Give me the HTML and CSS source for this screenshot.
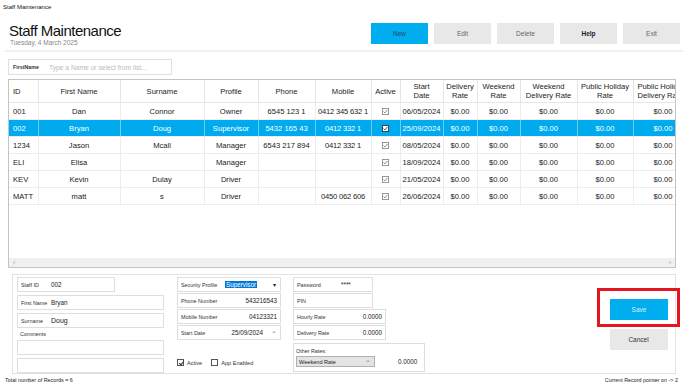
FILE: index.html
```html
<!DOCTYPE html>
<html lang="en">
<head>
  <meta charset="UTF-8">
  <title>Staff Maintenance</title>
  <link rel="stylesheet" href="styles.css">
</head>
<body>

  <div class="titlebar">Staff Maintenance</div>

  <!-- Header: title + toolbar -->
  <div class="header">
    <div class="title-block">
      <h1>Staff Maintenance</h1>
      <div class="date">Tuesday, 4 March 2025</div>
    </div>
    <div class="toolbar">
      <button class="btn btn-blue">New</button>
      <button class="btn">Edit</button>
      <button class="btn">Delete</button>
      <button class="btn btn-bold">Help</button>
      <button class="btn">Exit</button>
    </div>
  </div>
  <div class="divider"></div>

  <div class="search">
    <span class="search-label">FirstName</span>
    <span class="search-placeholder">Type a Name or select from list...</span>
  </div>

  <!-- Staff grid -->
  <div class="grid">
    <div class="grid-body">
      <table class="staff-table">
        <colgroup>
          <col style="width:29px"><col style="width:82px"><col style="width:84px"><col style="width:54px">
          <col style="width:57px"><col style="width:56px"><col style="width:29px"><col style="width:43px">
          <col style="width:34px"><col style="width:43px"><col style="width:57px"><col style="width:56px">
          <col style="width:60px">
        </colgroup>
        <thead>
          <tr>
            <th class="left">ID</th>
            <th>First Name</th>
            <th>Surname</th>
            <th>Profile</th>
            <th>Phone</th>
            <th>Mobile</th>
            <th>Active</th>
            <th>Start<br>Date</th>
            <th>Delivery<br>Rate</th>
            <th>Weekend<br>Rate</th>
            <th>Weekend<br>Delivery Rate</th>
            <th>Public Holiday<br>Rate</th>
            <th class="clip">Public Holiday<br>Delivery Rate</th>
          </tr>
        </thead>
        <tbody id="staffRows"></tbody>
      </table>
    </div>
    <div class="hscroll"><span>&lsaquo;</span><span>&rsaquo;</span></div>
  </div>

  <!-- Detail panel -->
  <div class="panel">
    <div class="col col-1">
      <div class="field short"><span class="lbl">Staff ID</span><span class="val">002</span></div>
      <div class="field"><span class="lbl">First Name</span><span class="val">Bryan</span></div>
      <div class="field"><span class="lbl">Surname</span><span class="val big">Doug</span></div>
      <div class="comments-label">Comments</div>
      <div class="field"></div>
      <div class="field"></div>
    </div>

    <div class="col col-2">
      <div class="field"><span class="lbl wide">Security Profile</span><span class="val"><span class="selected-text">Supervisor</span></span><span class="caret">&#9662;</span></div>
      <div class="field"><span class="lbl wide">Phone Number</span><span class="val right">543216543</span></div>
      <div class="field"><span class="lbl wide">Mobile Number</span><span class="val right">04123321</span></div>
      <div class="field"><span class="lbl wide">Start Date</span><span class="val right">25/09/2024</span><span class="chev">&#8964;</span></div>
      <div class="checks">
        <label class="check"><span class="box checked"></span>Active</label>
        <label class="check"><span class="box"></span>App Enabled</label>
      </div>
    </div>

    <div class="col col-3">
      <div class="field pw"><span class="lbl wide">Password</span><span class="val">****</span></div>
      <div class="field pw"><span class="lbl wide">PIN</span></div>
      <div class="field rate"><span class="lbl wide">Hourly Rate</span><span class="val right">0.0000</span></div>
      <div class="field rate"><span class="lbl wide">Delivery Rate</span><span class="val right">0.0000</span></div>
      <div class="other-rates">
        <div class="other-label">Other Rates:</div>
        <div class="other-row">
          <div class="select">Weekend Rate<span class="chev">&#8964;</span></div>
          <span class="other-val">0.0000</span>
        </div>
      </div>
    </div>

    <div class="actions">
      <div class="highlight">
        <button class="btn btn-blue btn-save">Save</button>
      </div>
      <button class="btn btn-cancel">Cancel</button>
    </div>
  </div>

  <div class="footer">
    <span>Total number of Records = 6</span>
    <span>Current Record pointer on -&gt; 2</span>
  </div>

  <script>
    const staff = [
      ["001", "Dan", "Connor", "Owner", "6545 123 1", "0412 345 632 1", "06/05/2024"],
      ["002", "Bryan", "Doug", "Supervisor", "5432 165 43", "0412 332 1", "25/09/2024"],
      ["1234", "Jason", "Mcall", "Manager", "6543 217 894", "0412 332 1", "08/05/2024"],
      ["ELI", "Elisa", "", "Manager", "", "", "18/09/2024"],
      ["KEV", "Kevin", "Dulay", "Driver", "", "", "21/05/2024"],
      ["MATT", "matt", "s", "Driver", "", "0450 062 606", "26/06/2024"]
    ];
    const check = '<svg class="chk" viewBox="0 0 8 8"><rect x="0.5" y="0.5" width="7" height="7"/><path d="M1.8 4.1 L3.3 5.6 L6.2 2.3"/></svg>';

    const tbody = document.getElementById('staffRows');
    staff.forEach(function (s, i) {
      const tr = document.createElement('tr');
      if (i === 1) tr.className = 'selected';
      tr.innerHTML =
        '<td class="left">' + s[0] + '</td>' +
        '<td>' + s[1] + '</td><td>' + s[2] + '</td><td>' + s[3] + '</td>' +
        '<td>' + s[4] + '</td><td class="wide-text">' + s[5] + '</td>' +
        '<td>' + check + '</td><td>' + s[6] + '</td>' +
        '<td>$0.00</td><td>$0.00</td><td>$0.00</td><td>$0.00</td><td>$0.00</td>';
      tbody.appendChild(tr);
    });
  </script>

</body>
</html>
```
FILE: styles.css
```css
body {
  margin: 0;
  width: 688px;
  height: 385px;
  overflow: hidden;
  background-color: white;
  font-family: "Liberation Sans", Arial, sans-serif;
  color: #222;
}
.titlebar {
  height: 14px;
  line-height: 14px;
  padding-left: 3px;
  font-size: 6px;
  color: #111;
}
.header {
  display: flex;
  justify-content: space-between;
  padding: 8px 8px 0 9px;
}
.header h1 {
  margin: 0;
  font-size: 15px;
  font-weight: normal;
  letter-spacing: -0.5px;
  line-height: 17px;
  color: #111;
}
.date {
  font-size: 6.5px;
  line-height: 8px;
  color: #888;
  padding-left: 1px;
}
.toolbar {
  display: flex;
  gap: 6px;
  margin-top: 1px;
}
.btn {
  width: 57px;
  height: 21px;
  border: none;
  padding: 0;
  background-color: #e8e8e8;
  color: #666;
  font-family: inherit;
  font-size: 6.5px;
}
.btn-blue {
  background-color: #00adee;
  color: #234a6a;
}
.btn-bold {
  font-weight: bold;
  color: #222;
}
.divider {
  height: 2px;
  margin: 3px 5px 0 5px;
  background-color: #f0f0f0;
}
.search {
  display: flex;
  align-items: center;
  width: 164px;
  height: 16px;
  margin: 7px 0 0 8px;
  border: 1px solid #e0e0e0;
  box-sizing: border-box;
}
.search-label {
  width: 36px;
  padding-left: 4px;
  font-size: 5.3px;
  font-weight: bold;
  color: #333;
}
.search-placeholder {
  font-size: 6.7px;
  color: #bbb;
}

/* grid */
.grid {
  display: flex;
  flex-direction: column;
  width: 668px;
  height: 189px;
  margin: 4px 0 0 8px;
  border: 1px solid #c4c4c4;
  box-sizing: border-box;
}
.grid-body {
  flex: 1;
  overflow: hidden;
}
.staff-table {
  table-layout: fixed;
  width: 684px;
  border-collapse: collapse;
  font-size: 7.6px;
  color: #1a1a1a;
}
.staff-table th {
  height: 22px;
  padding: 0;
  font-weight: normal;
  line-height: 9px;
  color: #222;
  border-right: 1px solid #e6e6e6;
  border-bottom: 1px solid #e6e6e6;
}
.staff-table td {
  height: 16px;
  padding: 0;
  text-align: center;
  white-space: nowrap;
  overflow: hidden;
  border-right: 1px solid #ececec;
  border-bottom: 1px solid #ececec;
}
.staff-table td.wide-text {
  letter-spacing: -0.2px;
}
.staff-table .left {
  text-align: left;
  padding-left: 4px;
}
.staff-table .clip {
  white-space: nowrap;
  text-align: left;
  padding-left: 4px;
}
.staff-table tr.selected td {
  background-color: #00aaee;
  color: white;
  border-right-color: #6fcdf4;
}
.chk {
  width: 7px;
  height: 7px;
  vertical-align: middle;
}
.chk rect {
  fill: none;
  stroke: #8a8a8a;
}
.chk path {
  fill: none;
  stroke: #6a6a6a;
  stroke-width: 0.9;
}
tr.selected .chk rect {
  fill: white;
  stroke: #333;
}
tr.selected .chk path {
  stroke: #222;
}
.hscroll {
  display: flex;
  justify-content: space-between;
  height: 9px;
  line-height: 9px;
  padding: 0 4px;
  background-color: #f0f0f0;
  font-size: 7px;
  color: #aaa;
}

/* detail panel */
.panel {
  display: flex;
  width: 664px;
  height: 100px;
  margin: 6px 0 0 12px;
  padding: 2px 0 0 4px;
  border: 1px solid #e2e2e2;
  box-sizing: border-box;
}
.col {
  display: flex;
  flex-direction: column;
}
.col-1 {
  width: 147px;
  gap: 3px;
}
.col-2 {
  width: 104px;
  margin-left: 13px;
  gap: 1px;
}
.col-3 {
  width: 132px;
  margin-left: 12px;
  gap: 1px;
}
.field {
  display: flex;
  align-items: center;
  height: 15px;
  padding: 0 3px;
  border: 1px solid #dedede;
  box-sizing: border-box;
  font-size: 6.3px;
}
.field.short {
  width: 98px;
}
.lbl {
  width: 30px;
  flex-shrink: 0;
  font-size: 5.4px;
  color: #333;
}
.lbl.wide {
  width: 44px;
}
.val {
  flex: 1;
  color: #222;
}
.val.big {
  font-size: 7px;
}
.val.right {
  text-align: right;
}
.selected-text {
  padding: 0 1px;
  background-color: #0078d7;
  color: white;
}
.caret {
  font-size: 6px;
  color: #222;
  padding: 0 1px 0 4px;
}
.chev {
  font-size: 7px;
  color: #888;
  padding-left: 8px;
  line-height: 6px;
  margin-top: -4px;
}
.comments-label {
  height: 6px;
  line-height: 6px;
  padding-left: 3px;
  font-size: 5.4px;
  color: #333;
}
.checks {
  display: flex;
  gap: 9px;
  margin-top: 18px;
  font-size: 5.6px;
  color: #333;
}
.check {
  display: flex;
  align-items: center;
  gap: 3px;
}
.box {
  width: 7px;
  height: 7px;
  border: 1px solid #555;
  box-sizing: border-box;
  position: relative;
}
.box.checked::after {
  content: "";
  position: absolute;
  left: 1.5px;
  top: 0;
  width: 2px;
  height: 4px;
  border-right: 1px solid #333;
  border-bottom: 1px solid #333;
  transform: rotate(40deg);
}
.field.pw {
  width: 80px;
}
.field.rate {
  width: 93px;
}
.other-rates {
  height: 29px;
  margin-top: 2px;
  padding: 4px 2px 0 2px;
  border: 1px solid #dedede;
  box-sizing: border-box;
}
.other-label {
  height: 7px;
  line-height: 7px;
  font-size: 5.4px;
  color: #333;
}
.other-row {
  display: flex;
  align-items: center;
  margin-top: 1px;
}
.select {
  display: flex;
  justify-content: space-between;
  align-items: center;
  width: 79px;
  height: 11px;
  padding: 0 3px 0 2px;
  background-color: #e4e4e4;
  border: 1px solid #b0b0b0;
  box-sizing: border-box;
  font-size: 5.6px;
  color: #222;
}
.other-val {
  margin-left: 23px;
  font-size: 6.3px;
}
.actions {
  display: flex;
  flex-direction: column;
  align-items: center;
  margin: 11px -5px 0 auto;
}
.highlight {
  width: 83px;
  height: 39px;
  padding: 7px 0 0 10px;
  border: 3px solid #e3161f;
  box-sizing: border-box;
}
.btn-save {
  width: 58px;
  color: #d8f2ff;
}
.btn-cancel {
  width: 58px;
  margin-top: 2px;
  color: #333;
}
.footer {
  display: flex;
  justify-content: space-between;
  padding: 0 10px 0 5px;
  margin-top: 2px;
  line-height: 9px;
  font-size: 5.4px;
  color: #222;
}
```
